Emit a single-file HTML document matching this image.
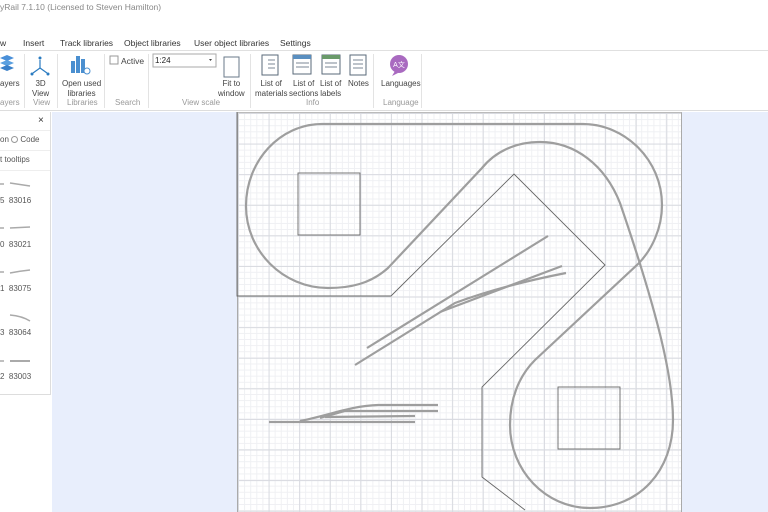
<!DOCTYPE html>
<html><head><style>
*{margin:0;padding:0;box-sizing:border-box}
body{width:768px;height:512px;overflow:hidden;background:#fff;font-family:"Liberation Sans",sans-serif;position:relative;color:#333}
.t{position:absolute;white-space:nowrap}
.title{left:0;top:2px;font-size:8.5px;color:#888}
.tab{top:38px;font-size:8.5px;color:#333}
.lbl{font-size:8px;color:#444;text-align:center;line-height:10px}
.grp{top:98px;font-size:8px;color:#999}
.sep{position:absolute;top:54px;height:54px;width:1px;background:#e3e3e3}
#ws{position:absolute;left:52px;top:112px;width:716px;height:400px;background:#e8eefc}
#cv{position:absolute;left:237px;top:112px;width:445px;height:400px;background-color:#fff;
background-image:linear-gradient(#d8dae0 1px,transparent 1px),linear-gradient(90deg,#d8dae0 1px,transparent 1px),linear-gradient(#eff0f3 1px,transparent 1px),linear-gradient(90deg,#eff0f3 1px,transparent 1px);
background-size:30.6px 30.6px,30.6px 30.6px,6.12px 6.12px,6.12px 6.12px;border-left:1px solid #aaa;border-right:1px solid #aaa;border-top:1px solid #bbb}
#side{position:absolute;left:0;top:112px;width:51px;height:283px;background:#fff;border-right:1px solid #ddd;border-bottom:1px solid #ddd}
.s{position:absolute;font-size:8px;color:#555;white-space:nowrap}
</style></head><body>
<div class="t title">yRail 7.1.10 (Licensed to Steven Hamilton)</div>
<div class="t tab" style="left:0">w</div>
<div class="t tab" style="left:23px">Insert</div>
<div class="t tab" style="left:60px">Track libraries</div>
<div class="t tab" style="left:124px">Object libraries</div>
<div class="t tab" style="left:194px">User object libraries</div>
<div class="t tab" style="left:280px">Settings</div>
<div style="position:absolute;left:0;top:50px;width:768px;height:1px;background:#e0e0e0"></div>
<div style="position:absolute;left:0;top:110px;width:768px;height:1px;background:#ddd"></div>
<svg width="768" height="112" style="position:absolute;left:0;top:0">
 <g fill="#4a90d9"><path d="M0 58 L7 55 L14 58 L7 61Z"/><path d="M0 63 L7 60 L14 63 L7 66Z" fill="#5aa0e0"/><path d="M0 68 L7 65 L14 68 L7 71Z" fill="#3a80c9"/></g>
 <g stroke="#2a7bc0" stroke-width="1.2"><line x1="40" y1="60" x2="40" y2="68"/><line x1="40" y1="68" x2="33" y2="73"/><line x1="40" y1="68" x2="47" y2="73"/></g>
 <g fill="#2a7bc0"><circle cx="40" cy="58" r="1.5"/><circle cx="32" cy="74" r="1.5"/><circle cx="48" cy="74" r="1.5"/></g>
 <g fill="#4a8fd0"><rect x="71" y="61" width="4" height="12"/><rect x="76" y="56" width="4" height="17"/><rect x="81" y="59" width="4" height="14"/></g>
 <circle cx="87" cy="71" r="3" fill="#fff" stroke="#4a8fd0"/>
 <rect x="110" y="56" width="8" height="8" fill="#fff" stroke="#999"/>
 <rect x="153" y="54" width="63" height="13" fill="#fff" stroke="#aaa"/>
 <path d="M209 59 l3 0 l-1.5 2z" fill="#444"/>
 <rect x="224" y="57" width="15" height="20" fill="#fff" stroke="#6a7a8a"/>
 <g fill="#fff" stroke="#5a6a7a"><rect x="262" y="55" width="16" height="20"/><rect x="293" y="55" width="18" height="19"/><rect x="322" y="55" width="18" height="19"/><rect x="350" y="55" width="16" height="20"/></g>
 <rect x="293" y="55" width="18" height="4" fill="#5a8fc0"/><rect x="322" y="55" width="18" height="4" fill="#6a9a6a"/>
 <g stroke="#5a6a7a" stroke-width="0.8"><line x1="268" y1="60" x2="275" y2="60"/><line x1="268" y1="64" x2="275" y2="64"/><line x1="268" y1="68" x2="275" y2="68"/><line x1="296" y1="63" x2="309" y2="63"/><line x1="296" y1="67" x2="309" y2="67"/><line x1="325" y1="63" x2="337" y2="63"/><line x1="325" y1="67" x2="337" y2="67"/><line x1="353" y1="60" x2="363" y2="60"/><line x1="353" y1="64" x2="363" y2="64"/><line x1="353" y1="68" x2="363" y2="68"/></g>
 <circle cx="399" cy="64" r="9" fill="#a96ac0"/><path d="M395 71 l-3 5 l6 -3z" fill="#a96ac0"/>
 <text x="399" y="67" font-size="7" fill="#fff" text-anchor="middle" font-family="Liberation Sans">A文</text>
</svg>
<div class="t lbl" style="left:0;top:79px">ayers</div>
<div class="t lbl" style="left:32px;top:79px">3D<br>View</div>
<div class="t lbl" style="left:62px;top:79px">Open used<br>libraries</div>
<div class="t lbl" style="left:121px;top:56px;font-size:8.5px">Active</div>
<div class="t lbl" style="left:155px;top:56px;font-size:8px;color:#222">1:24</div>
<div class="t lbl" style="left:218px;top:79px">Fit to<br>window</div>
<div class="t lbl" style="left:255px;top:79px">List of<br>materials</div>
<div class="t lbl" style="left:289px;top:79px">List of<br>sections</div>
<div class="t lbl" style="left:320px;top:79px">List of<br>labels</div>
<div class="t lbl" style="left:348px;top:79px">Notes</div>
<div class="t lbl" style="left:381px;top:79px">Languages</div>
<div class="t grp" style="left:0">ayers</div>
<div class="t grp" style="left:33px">View</div>
<div class="t grp" style="left:67px">Libraries</div>
<div class="t grp" style="left:115px">Search</div>
<div class="t grp" style="left:182px">View scale</div>
<div class="t grp" style="left:306px">Info</div>
<div class="t grp" style="left:383px">Language</div>
<div class="sep" style="left:24px"></div><div class="sep" style="left:57px"></div><div class="sep" style="left:104px"></div><div class="sep" style="left:148px"></div><div class="sep" style="left:250px"></div><div class="sep" style="left:373px"></div><div class="sep" style="left:421px"></div>
<div id="ws"></div>
<div id="side">
 <div class="s" style="left:38px;top:3px;font-size:10px;color:#333">×</div>
 <div style="position:absolute;left:0;top:18px;width:50px;height:1px;background:#eee"></div>
 <div class="s" style="left:0;top:23px">on <span style="display:inline-block;width:7px;height:7px;border:1px solid #999;border-radius:50%;vertical-align:-1px"></span> Code</div>
 <div style="position:absolute;left:0;top:38px;width:50px;height:1px;background:#eee"></div>
 <div class="s" style="left:0;top:43px">t tooltips</div>
 <div style="position:absolute;left:0;top:58px;width:50px;height:1px;background:#eee"></div>
 <div class="s" style="left:0;top:84px">5 &nbsp;83016</div>
 <div class="s" style="left:0;top:128px">0 &nbsp;83021</div>
 <div class="s" style="left:0;top:172px">1 &nbsp;83075</div>
 <div class="s" style="left:0;top:216px">3 &nbsp;83064</div>
 <div class="s" style="left:0;top:260px">2 &nbsp;83003</div>
</div>
<div id="cv"></div>
<svg width="768" height="512" style="position:absolute;left:0;top:0">
 <g stroke="#aaa" stroke-width="1.5" fill="none">
  <line x1="0" y1="184" x2="4" y2="184"/><path d="M10 183 L30 186"/>
  <line x1="0" y1="228" x2="4" y2="228"/><path d="M10 228 L30 227"/>
  <line x1="0" y1="272" x2="4" y2="272"/><path d="M10 273 Q20 271 30 270"/>
  <path d="M10 315 Q22 316 30 321"/>
  <line x1="0" y1="361" x2="4" y2="361"/><line x1="10" y1="361" x2="30" y2="361" stroke-width="2"/>
 </g>
 <g stroke="#9e9e9e" stroke-width="2.2" fill="none">
  <path d="M322 124 L583 124 C625 124 662 160 662 205 C662 228 652 250 638 264 L535 360 C518 377 510 400 510 425 C510 470 545 508 590 508 C640 508 673 470 673 420 C673 380 660 320 620 203 C605 165 575 142 540 142 C515 142 495 152 482 168 L388 268 C370 284 350 288 328 288 C283 288 246 251 246 206 C246 161 280 124 322 124 Z"/>
  <line x1="367" y1="348" x2="548" y2="236"/>
  <path d="M355 365 L455 303 C490 290 530 280 566 273"/>
  <path d="M440 312 L562 266"/>
  <line x1="269" y1="422" x2="415" y2="422"/>
  <path d="M300 421 C330 415 350 406 378 405 L438 405"/>
  <path d="M320 418 L345 411 L438 411"/>
  <path d="M325 417 L415 416"/>
 </g>
 <g stroke="#666" stroke-width="0.9" fill="none">
  <path d="M237 112 L237 296 L391 296 L514 174 L605 265 L482 387 L482 477 L525 510"/>
  <rect x="298" y="173" width="62" height="62"/>
  <rect x="558" y="387" width="62" height="62"/>
 </g>
</svg>
</body></html>
